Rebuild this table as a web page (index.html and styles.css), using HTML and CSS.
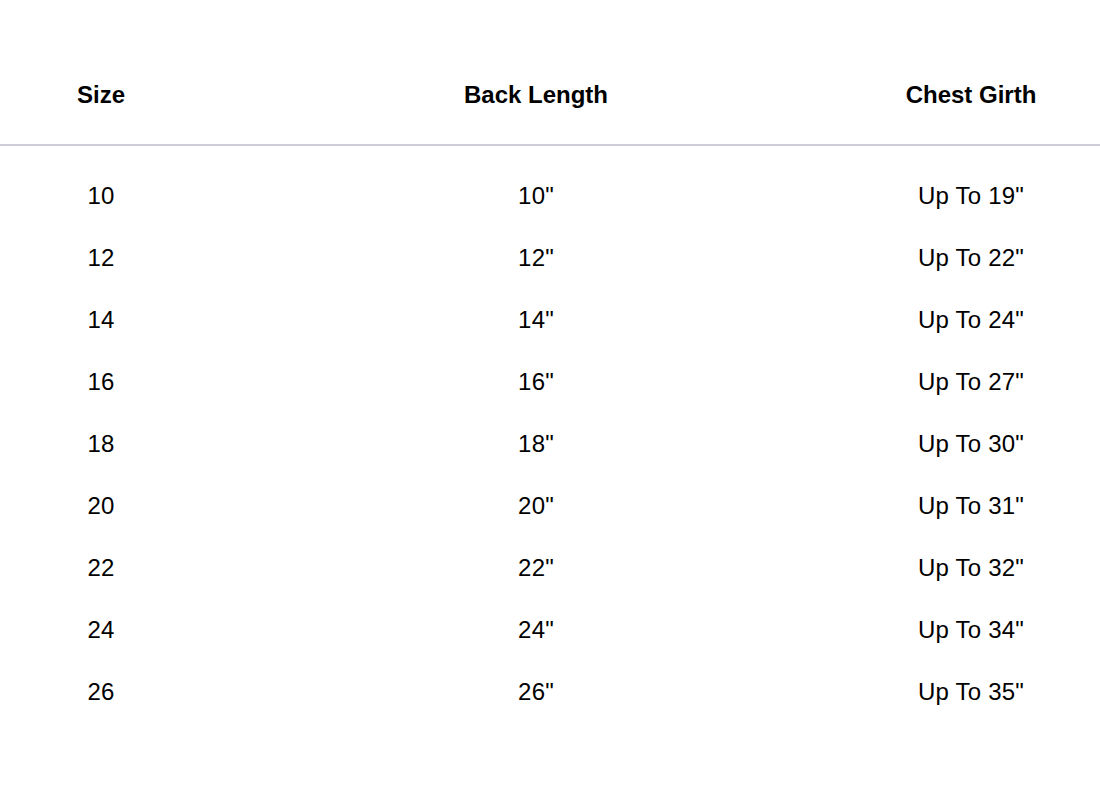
FILE: index.html
```html
<!DOCTYPE html>
<html lang="en">
<head>
<meta charset="utf-8">
<title>Size Chart</title>
<link rel="stylesheet" href="styles.css">
</head>
<body>
<div class="chart">
  <div class="row head">
    <div class="cell">Size</div>
    <div class="cell">Back Length</div>
    <div class="cell">Chest Girth</div>
  </div>
  <div class="body">
    <div class="row"><div class="cell">10</div><div class="cell">10"</div><div class="cell">Up To 19"</div></div>
    <div class="row"><div class="cell">12</div><div class="cell">12"</div><div class="cell">Up To 22"</div></div>
    <div class="row"><div class="cell">14</div><div class="cell">14"</div><div class="cell">Up To 24"</div></div>
    <div class="row"><div class="cell">16</div><div class="cell">16"</div><div class="cell">Up To 27"</div></div>
    <div class="row"><div class="cell">18</div><div class="cell">18"</div><div class="cell">Up To 30"</div></div>
    <div class="row"><div class="cell">20</div><div class="cell">20"</div><div class="cell">Up To 31"</div></div>
    <div class="row"><div class="cell">22</div><div class="cell">22"</div><div class="cell">Up To 32"</div></div>
    <div class="row"><div class="cell">24</div><div class="cell">24"</div><div class="cell">Up To 34"</div></div>
    <div class="row"><div class="cell">26</div><div class="cell">26"</div><div class="cell">Up To 35"</div></div>
  </div>
</div>
</body>
</html>
```
FILE: styles.css
```css
html, body {
  margin: 0;
  padding: 0;
  background: #ffffff;
}
body {
  font-family: "Liberation Sans", Arial, sans-serif;
  color: #000000;
  width: 1100px;
  height: 798px;
  overflow: hidden;
}
.chart {
  padding-top: 46px;
}
.row {
  display: grid;
  grid-template-columns: 202px 668px 202px;
  padding-right: 28px;
  align-items: center;
  height: 62px;
  font-size: 24px;
}
.cell {
  text-align: center;
  white-space: nowrap;
}
.head {
  height: 98px;
  font-weight: 700;
  border-bottom: 2px solid #cfcdda;
}
.body {
  padding-top: 19px;
}
.body .row {
  letter-spacing: 0.2px;
}
```
